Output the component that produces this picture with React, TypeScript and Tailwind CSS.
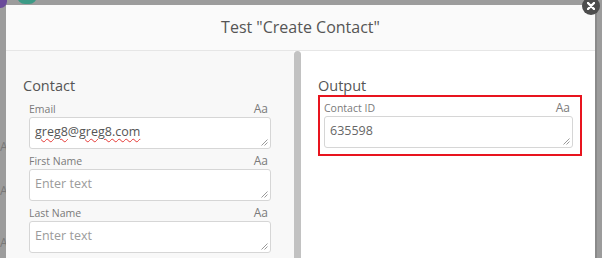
import React from "react";

const ResizeGrip = () => {
  return (
    <svg
      width="8"
      height="8"
      viewBox="0 0 8 8"
      className="absolute bottom-[2px] right-[2px]"
    >
      <path d="M7.5 1.5L1.5 7.5M7.5 4.5L4.5 7.5" stroke="#9a9a9a" strokeWidth="1" />
    </svg>
  );
};

const FieldLabel = ({ name }: { name: string }) => {
  return (
    <div className="flex h-[16px] items-center justify-between pr-[3px]">
      <span className="text-[10.5px] leading-[16px] text-[#7a7a7a]">{name}</span>
      <span className="text-[12px] leading-[16px] text-[#7a7a7a]">Aa</span>
    </div>
  );
};

const TextBox = ({ children }: { children: React.ReactNode }) => {
  return (
    <div className="relative h-[32px] rounded-[3px] border border-[#d6d6d6] bg-white px-[5px] pt-[5px] text-[12.5px] leading-[18px]">
      {children}
      <ResizeGrip />
    </div>
  );
};

const Field = ({ name, value }: { name: string; value?: React.ReactNode }) => {
  return (
    <div className="mb-[4px] flex flex-col">
      <FieldLabel name={name} />
      <TextBox>
        {value ? (
          <span className="text-[#555]">{value}</span>
        ) : (
          <span className="text-[#9b9b9b]">Enter text</span>
        )}
      </TextBox>
    </div>
  );
};

const Squiggle = ({ children }: { children: React.ReactNode }) => {
  return (
    <span className="underline decoration-[#e53935] decoration-wavy decoration-1 underline-offset-[2px]">
      {children}
    </span>
  );
};

const App = () => {
  return (
    <div
      className="relative flex h-[258px] w-[602px] overflow-hidden bg-[#9c9c9c] pt-[5px] pl-[6px]"
      style={{ fontFamily: '"Open Sans", "Noto Sans", sans-serif' }}
    >
      {/* page behind the overlay */}
      <div className="absolute left-[-6px] top-[-6px] h-[14px] w-[13px] rounded-full bg-[#6a4a9a]" />
      <div className="absolute left-[17px] top-[-12px] h-[16px] w-[20px] rounded-full bg-[#3c9a86]" />
      <div className="absolute left-0 top-[141px] text-[12px] leading-none text-[#777]">A</div>
      <div className="absolute left-0 top-[185px] text-[12px] leading-none text-[#777]">A</div>
      <div className="absolute left-0 top-[237px] text-[12px] leading-none text-[#777]">A</div>

      {/* modal */}
      <div className="relative flex w-[589px] flex-col bg-white">
        <div className="flex h-[46px] shrink-0 items-center justify-center border-b border-[#e6e6e6] bg-[#fafafa] pb-[2px]">
          <span className="text-[16px] text-[#555]">Test "Create Contact"</span>
        </div>
        <div className="flex flex-1">
          {/* inputs */}
          <div className="flex w-[288px] flex-col bg-[#f8f8f8] pl-[17px] pt-[24px]">
            <div className="mb-[4px] text-[14.5px] leading-[22px] text-[#555]">Contact</div>
            <div className="flex flex-col pl-[6px] pr-[23px]">
              <Field
                name="Email"
                value={
                  <>
                    <Squiggle>greg8</Squiggle>@<Squiggle>greg8.com</Squiggle>
                  </>
                }
              />
              <Field name="First Name" />
              <Field name="Last Name" />
            </div>
          </div>
          {/* scrollbar */}
          <div className="w-[7px] rounded-t-[4px] bg-[#c2c2c2]" />
          {/* output */}
          <div className="flex flex-1 flex-col bg-white pl-[17px] pr-[13px] pt-[24px]">
            <div className="mb-[-2px] text-[14.5px] leading-[22px] text-[#555]">Output</div>
            <div className="flex flex-col border-2 border-[#e8141e] pb-[6px] pl-[4px] pr-[7px] pt-[3px]">
              <FieldLabel name="Contact ID" />
              <TextBox>
                <span className="text-[#666]">635598</span>
              </TextBox>
            </div>
          </div>
        </div>
        {/* close */}
        <div className="absolute right-[-5px] top-[-8px] flex h-[18px] w-[18px] items-center justify-center rounded-full bg-[#4d4d4d]">
          <svg width="8" height="8" viewBox="0 0 8 8">
            <path d="M1 1L7 7M7 1L1 7" stroke="#fff" strokeWidth="2.4" strokeLinecap="round" />
          </svg>
        </div>
      </div>
      <div className="w-[2px] bg-[#8a8a8a]" />
    </div>
  );
};

export default App;
